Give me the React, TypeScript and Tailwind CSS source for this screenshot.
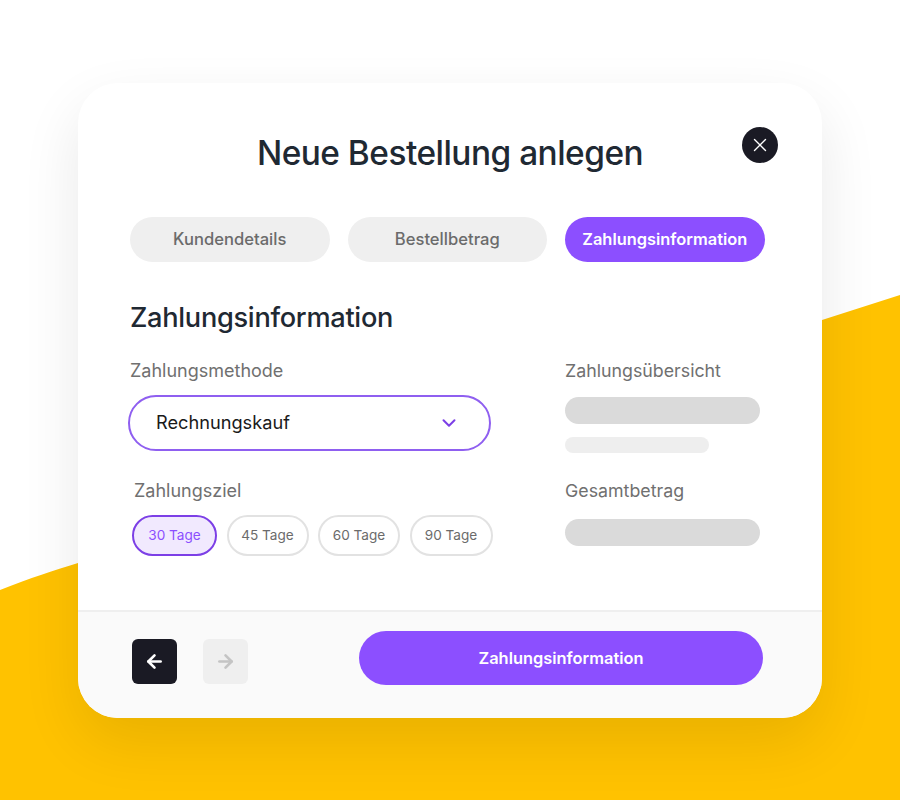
import React from 'react';
import { X, ChevronDown, ArrowLeft, ArrowRight } from 'lucide-react';

const font = { fontFamily: 'Inter, sans-serif' };

const Tab = ({ label, active }: { label: string; active?: boolean }) => (
  <div
    className={
      active
        ? 'w-[199.5px] h-[45px] rounded-full bg-[#8c4fff] text-white font-semibold text-[16.4px] flex items-center justify-center'
        : 'w-[199.5px] h-[45px] rounded-full bg-[#efefef] text-[#6b6b6b] font-medium text-[16.6px] flex items-center justify-center'
    }
  >
    {label}
  </div>
);

const Chip = ({ label, width, active }: { label: string; width: string; active?: boolean }) => (
  <div
    className={
      active
        ? `${width} h-[41px] rounded-full border-2 border-[#7c3fe6] bg-[#f1e9fe] text-[#8c4fff] text-[13.6px] flex items-center justify-center`
        : `${width} h-[41px] rounded-full border-2 border-[#e2e2e2] bg-white text-[#6b6b6b] text-[13.6px] flex items-center justify-center`
    }
  >
    {label}
  </div>
);

export default function App() {
  return (
    <div className="relative w-[900px] h-[800px] overflow-hidden bg-white" style={font}>
      {/* yellow wave behind the card */}
      <svg className="absolute inset-0" width="900" height="800" viewBox="0 0 900 800">
        <path d="M0 590 C 30 578 55 570 78 563 L 822 320 L 900 295 L 900 800 L 0 800 Z" fill="#ffc200" />
      </svg>

      <div className="relative ml-[78px] pt-[83px] w-[744px]">
        <div className="relative h-[635px] bg-white rounded-[40px] overflow-hidden shadow-[0_24px_60px_rgba(0,0,0,0.09)] flex flex-col">
          <div className="flex-1 px-[52px]">
            <h1 className="mt-[48px] h-[44px] text-center text-[33.4px] leading-[44px] font-medium text-[#1f2933] tracking-[-0.5px]">
              Neue Bestellung anlegen
            </h1>
            <div className="mt-[42px] flex gap-[18px]">
              <Tab label="Kundendetails" />
              <Tab label="Bestellbetrag" />
              <Tab label="Zahlungsinformation" active />
            </div>
            <h2 className="mt-[38px] text-[27.2px] leading-[36px] font-medium text-[#1f2933] tracking-[-0.3px]">
              Zahlungsinformation
            </h2>
            <div className="mt-[22px] flex">
              <div className="w-[435px]">
                <div className="text-[18px] leading-[26px] text-[#707070]">Zahlungsmethode</div>
                <div className="mt-[11px] -ml-[2px] w-[363px] h-[56px] rounded-full border-2 border-[#8f5ff0] flex items-center justify-between pl-[26px] pr-[29px]">
                  <span className="text-[18.2px] text-[#1a1a1a]">Rechnungskauf</span>
                  <ChevronDown size={22} strokeWidth={2.2} className="text-[#7c3fe6]" />
                </div>
                <div className="mt-[27px] ml-[4px] text-[18px] leading-[26px] text-[#707070]">Zahlungsziel</div>
                <div className="mt-[11px] ml-[2px] flex gap-[9.5px]">
                  <Chip label="30 Tage" width="w-[85px]" active />
                  <Chip label="45 Tage" width="w-[82px]" />
                  <Chip label="60 Tage" width="w-[82px]" />
                  <Chip label="90 Tage" width="w-[83px]" />
                </div>
              </div>
              <div className="w-[195px]">
                <div className="text-[17.8px] leading-[26px] text-[#707070]">Zahlungsübersicht</div>
                <div className="mt-[13px] h-[27px] rounded-full bg-[#dadada]" />
                <div className="mt-[13px] h-[16px] w-[144px] rounded-full bg-[#eeeeee]" />
                <div className="mt-[25px] text-[17.8px] leading-[26px] text-[#707070]">Gesamtbetrag</div>
                <div className="mt-[15px] h-[27px] rounded-full bg-[#dadada]" />
              </div>
            </div>
          </div>

          <div className="h-[108px] bg-[#fafafa] border-t-2 border-[#efefef] flex items-start pl-[54px] pr-[59px]">
            <div className="mt-[27px] w-[45px] h-[45px] rounded-[6px] bg-[#1a1a24] flex items-center justify-center">
              <ArrowLeft size={21} strokeWidth={3} className="text-white" />
            </div>
            <div className="mt-[27px] ml-[26px] w-[45px] h-[45px] rounded-[6px] bg-[#efefef] flex items-center justify-center">
              <ArrowRight size={21} strokeWidth={3} className="text-[#c4c4c4]" />
            </div>
            <div className="mt-[19px] ml-auto w-[404px] h-[54px] rounded-full bg-[#8c4fff] text-white font-semibold text-[16.4px] flex items-center justify-center">
              Zahlungsinformation
            </div>
          </div>

          <div className="absolute left-[664px] top-[44px] w-[36px] h-[36px] rounded-full bg-[#1a1a24] flex items-center justify-center">
            <X size={22} strokeWidth={1.5} className="text-white" />
          </div>
        </div>
      </div>
    </div>
  );
}
